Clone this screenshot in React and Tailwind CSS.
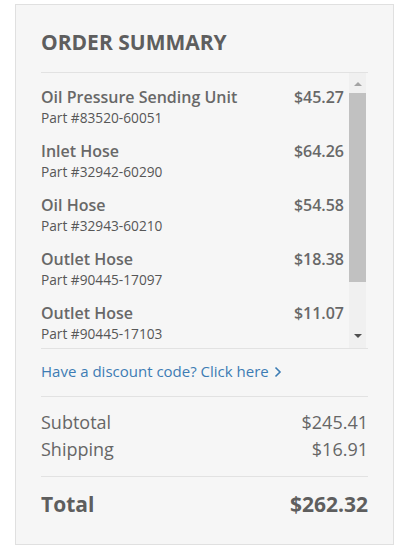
import React from "react";

const items = [
  { name: "Oil Pressure Sending Unit", part: "Part #83520-60051", price: "$45.27" },
  { name: "Inlet Hose", part: "Part #32942-60290", price: "$64.26" },
  { name: "Oil Hose", part: "Part #32943-60210", price: "$54.58" },
  { name: "Outlet Hose", part: "Part #90445-17097", price: "$18.38" },
  { name: "Outlet Hose", part: "Part #90445-17103", price: "$11.07" },
];

export default function App() {
  return (
    <div className="pt-[4px] pl-[15px]" style={{ fontFamily: '"Open Sans", sans-serif' }}>
      <div className="w-[379px] h-[541px] border border-[#e0e0e0] bg-[#f6f6f6] pl-[25px] pr-[25px] flex flex-col text-[#666666]">
        <h2 className="mt-[22px] text-[21px] leading-[30px] font-bold text-[#5e5e5e]">ORDER SUMMARY</h2>
        <div className="mt-[15px] h-[277px] border-t border-b border-[#e2e2e2] flex">
          <div className="flex-1 overflow-hidden pt-[13px] flex flex-col gap-[12px]">
            {items.map((it, i) => (
              <div key={i} className="flex justify-between">
                <div className="flex flex-col">
                  <span className="text-[16px] leading-[22px] font-semibold text-[#686868]">{it.name}</span>
                  <span className="text-[13.7px] leading-[20px] text-[#575757]">{it.part}</span>
                </div>
                <span className="text-[16px] leading-[22px] font-semibold text-[#686868]">{it.price}</span>
              </div>
            ))}
          </div>
          <div className="w-[17px] ml-[5px] mr-[2px] bg-[#f0f0f0] flex flex-col">
            <div className="h-[20px] flex items-center justify-center pt-[2px]">
              <div className="w-0 h-0 border-l-[4px] border-r-[4px] border-b-[4px] border-l-transparent border-r-transparent border-b-[#a3a3a3]" />
            </div>
            <div className="h-[189px] bg-[#c1c1c1]" />
            <div className="flex-1" />
            <div className="h-[20px] flex items-center justify-center pb-[4px]">
              <div className="w-0 h-0 border-l-[4px] border-r-[4px] border-t-[4px] border-l-transparent border-r-transparent border-t-[#505050]" />
            </div>
          </div>
        </div>
        <a className="mt-[12px] text-[15px] leading-[21px] text-[#3d7cb4] flex items-center gap-[5px]">
          <span>Have a discount code? Click here</span>
          <svg width="8" height="12" viewBox="0 0 8 12" fill="none" stroke="#3d7cb4" strokeWidth="1.6">
            <path d="M1.5 1.5 L6 6 L1.5 10.5" />
          </svg>
        </a>
        <div className="mt-[14px] border-t border-[#e2e2e2]" />
        <div className="mt-[12px] flex justify-between text-[18px] leading-[27px] font-medium">
          <span>Subtotal</span>
          <span>$245.41</span>
        </div>
        <div className="flex justify-between text-[18px] leading-[27px] font-medium">
          <span>Shipping</span>
          <span>$16.91</span>
        </div>
        <div className="mt-[13px] border-t border-[#e2e2e2]" />
        <div className="mt-[12px] flex justify-between text-[21px] leading-[30px] font-bold text-[#5e5e5e]">
          <span>Total</span>
          <span>$262.32</span>
        </div>
      </div>
    </div>
  );
}
